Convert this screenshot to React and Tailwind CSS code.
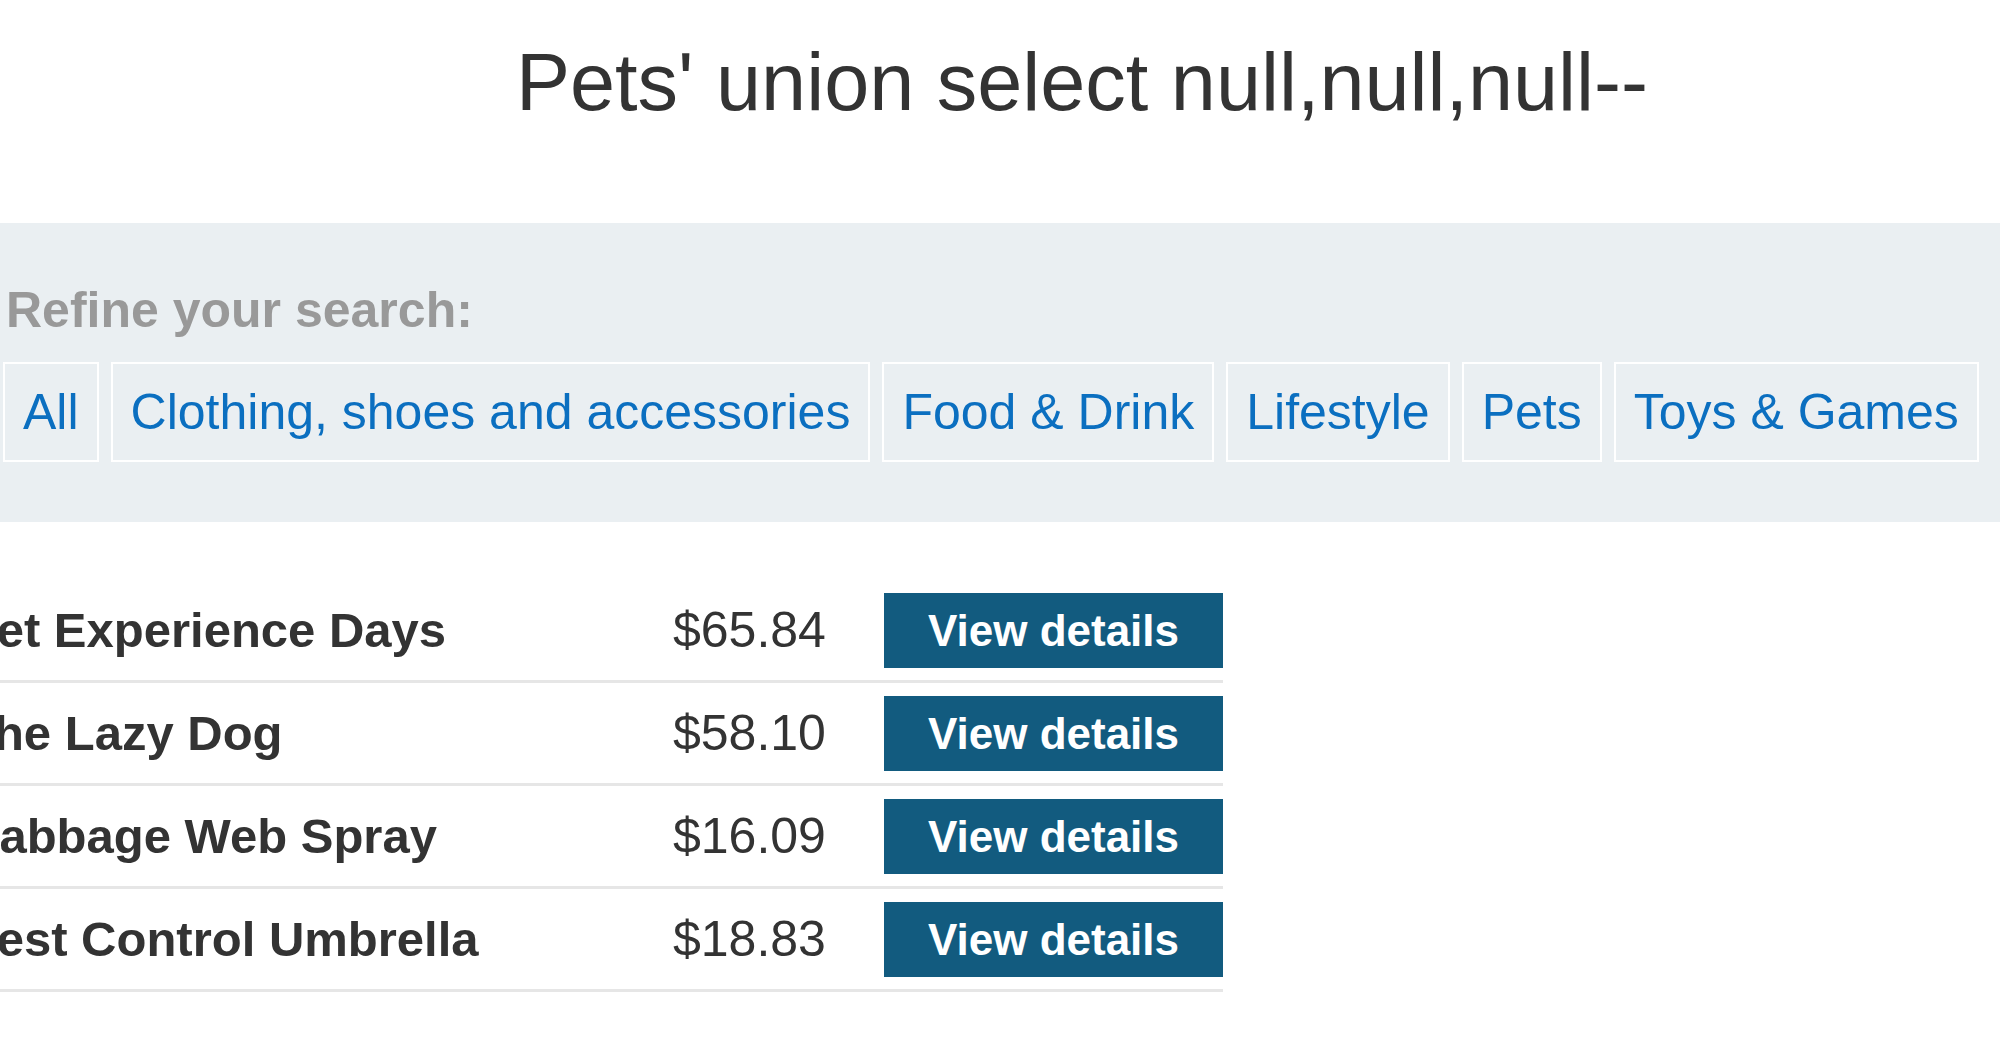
import React from "react";

const categories = [
  "All",
  "Clothing, shoes and accessories",
  "Food & Drink",
  "Lifestyle",
  "Pets",
  "Toys & Games",
];

const products = [
  { name: "Pet Experience Days", price: "$65.84" },
  { name: "The Lazy Dog", price: "$58.10" },
  { name: "Cabbage Web Spray", price: "$16.09" },
  { name: "Pest Control Umbrella", price: "$18.83" },
];

export default function App() {
  return (
    <div
      className="w-[2000px] h-[1050px] overflow-hidden bg-white text-[#333333]"
      style={{ fontFamily: '"Liberation Sans", Arial, sans-serif' }}
    >
      <h1 className="pt-[35px] pl-[516px] text-[81px] leading-[94px] font-normal whitespace-nowrap text-[#333333]">
        Pets' union select null,null,null--
      </h1>

      <section className="mt-[94px] bg-[#eaeff2] pt-[59px] pb-[60px] pl-[2px]">
        <div className="pl-[4px] text-[50px] leading-[57.5px] font-bold text-[#999999] whitespace-nowrap">
          Refine your search:
        </div>
        <div className="mt-[22px] flex gap-[12px] pl-[1px]">
          {categories.map((c) => (
            <a
              key={c}
              className="border-2 border-white px-[18px] pt-[18px] pb-[18px] text-[50px] leading-[60px] text-[#0b6fc0] whitespace-nowrap"
            >
              {c}
            </a>
          ))}
        </div>
      </section>

      <div className="mt-[58px] w-[1223px] overflow-hidden">
        <div className="-ml-[36px] w-[1259px] flex flex-col">
          {products.map((p) => (
            <div
              key={p.name}
              className="flex items-center pt-[13px] pb-[12px] border-b-[3px] border-[#e6e6e6]"
            >
              <div className="flex-1 text-[49px] leading-[56px] font-bold text-[#333333] whitespace-nowrap">
                {p.name}
              </div>
              <div className="w-[211px] text-[50px] leading-[56px] text-[#333333] whitespace-nowrap">
                {p.price}
              </div>
              <button className="w-[339px] h-[75px] bg-[#125b7f] text-white text-[44px] font-bold leading-[75px] text-center whitespace-nowrap">
                View details
              </button>
            </div>
          ))}
        </div>
      </div>
    </div>
  );
}
